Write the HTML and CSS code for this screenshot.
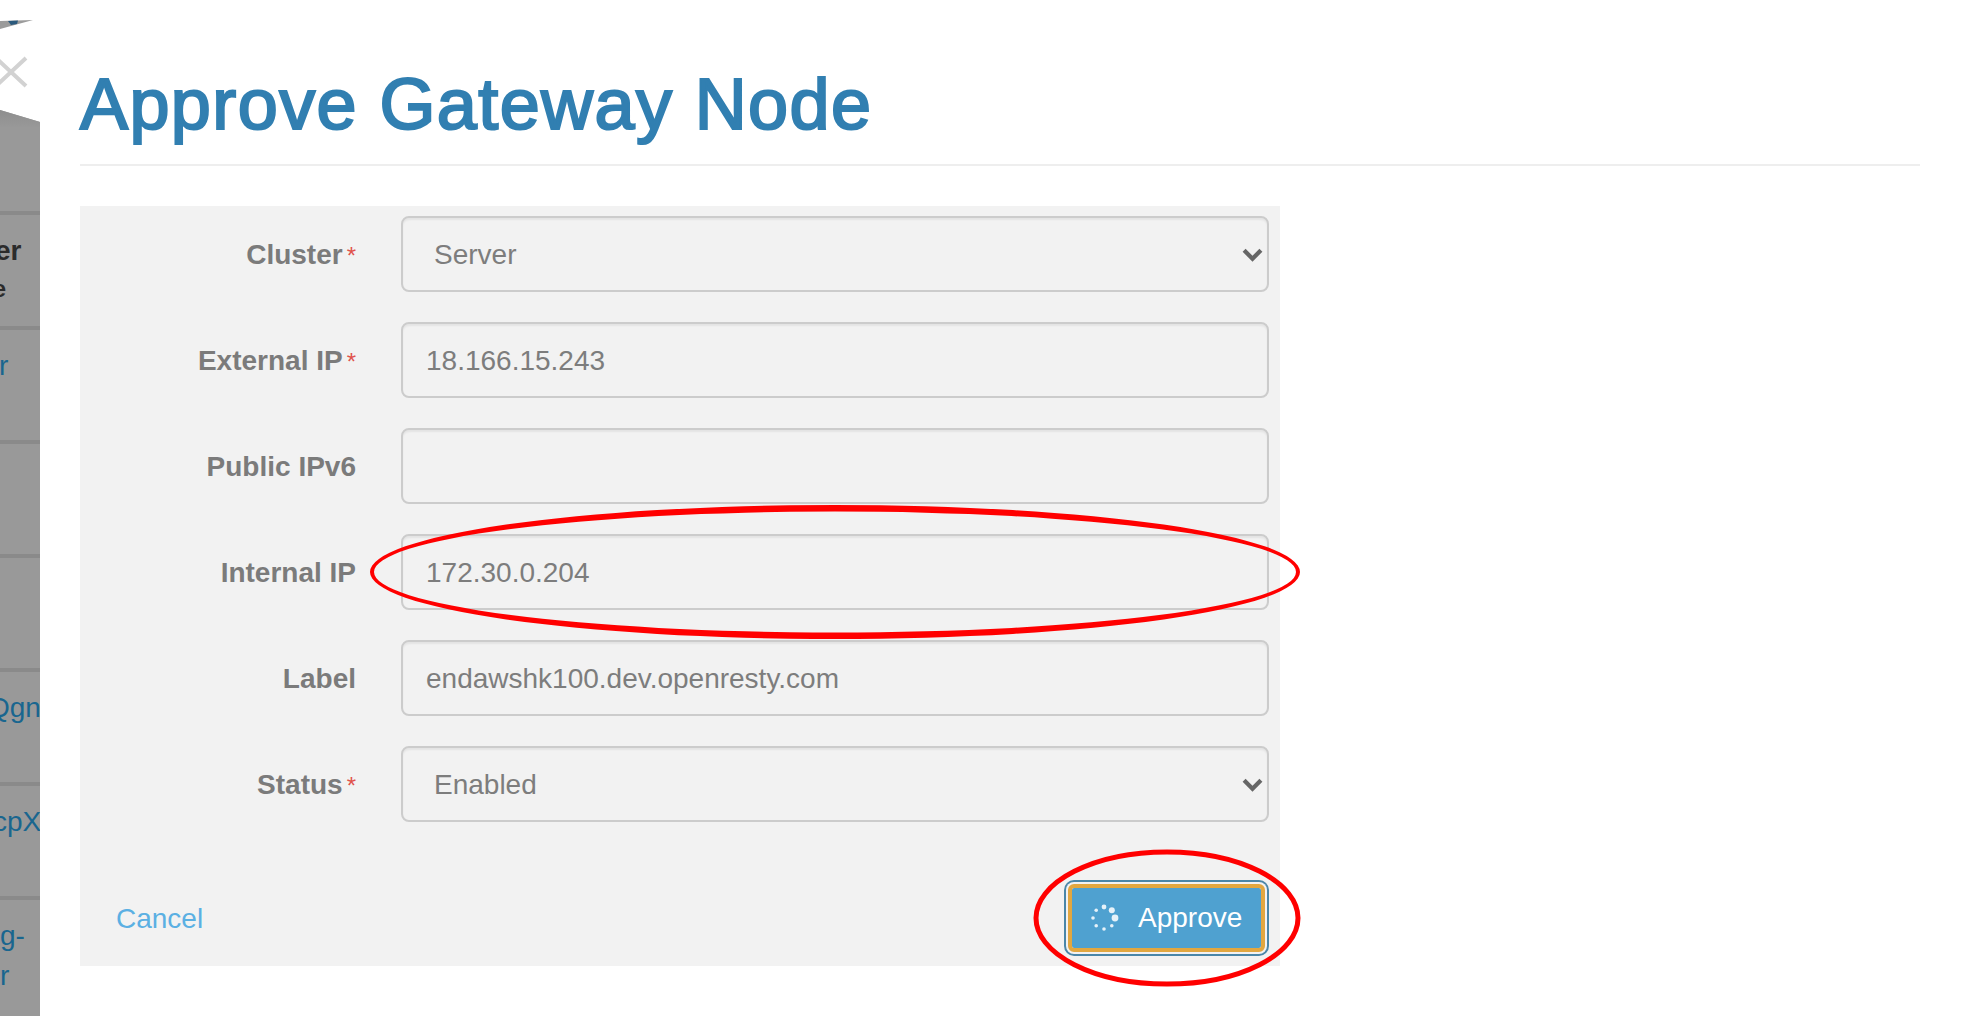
FILE: index.html
```html
<!DOCTYPE html>
<html lang="en">
<head>
<meta charset="utf-8">
<title>Approve Gateway Node</title>
<link rel="stylesheet" href="styles.css">
</head>
<body>
<div class="page">
  <aside class="backdrop">
    <div class="row row-blank"></div>
    <div class="row row-head"><b class="head-a">Cluster</b><b class="head-b">Node</b></div>
    <div class="row"><a class="link-r">r</a></div>
    <div class="row"></div>
    <div class="row"></div>
    <div class="row"><a class="link-q">Qgn</a></div>
    <div class="row"><a class="link-c">cpX</a></div>
    <div class="row row-two"><a>g-</a><a>r</a></div>
  </aside>
  <main class="content">
    <h1 class="title">Approve Gateway Node</h1>
    <form class="panel">
      <div class="field">
        <label class="label">Cluster<span class="req">*</span></label>
        <div class="select-wrap">
          <select class="control select"><option>Server</option></select>
          <svg class="chevron" viewBox="0 0 20 14"><path d="M2 3l8 8 8-8"/></svg>
        </div>
      </div>
      <div class="field">
        <label class="label">External IP<span class="req">*</span></label>
        <input class="control" type="text" value="18.166.15.243">
      </div>
      <div class="field">
        <label class="label">Public IPv6</label>
        <input class="control" type="text" value="">
      </div>
      <div class="field">
        <label class="label">Internal IP</label>
        <input class="control" type="text" value="172.30.0.204">
      </div>
      <div class="field">
        <label class="label">Label</label>
        <input class="control" type="text" value="endawshk100.dev.openresty.com">
      </div>
      <div class="field">
        <label class="label">Status<span class="req">*</span></label>
        <div class="select-wrap">
          <select class="control select"><option>Enabled</option></select>
          <svg class="chevron" viewBox="0 0 20 14"><path d="M2 3l8 8 8-8"/></svg>
        </div>
      </div>
      <div class="actions">
        <a class="cancel" href="#">Cancel</a>
        <button class="approve" type="button">
          <svg class="spinner" viewBox="0 0 30 30">
            <circle cx="26" cy="15" r="3.4"/>
            <circle cx="22.8" cy="7.2" r="3"/>
            <circle cx="15" cy="4" r="2.4"/>
            <circle cx="7.2" cy="7.2" r="1.8"/>
            <circle cx="4" cy="15" r="1.8"/>
            <circle cx="7.2" cy="22.8" r="1.8"/>
            <circle cx="15" cy="26" r="1.8"/>
            <circle cx="22.8" cy="22.8" r="1.8"/>
          </svg>
          <span>Approve</span>
        </button>
      </div>
    </form>
  </main>
</div>

<svg class="torn" viewBox="0 0 40 130">
  <polygon class="torn-tip" points="0,21 33,20 0,29"/>
  <polygon class="torn-dark" points="8,21 18,20.6 17,24 11,25"/>
</svg>
<svg class="close" viewBox="0 0 28 32"><path d="M-4 2L26 30M26 2L-4 30"/></svg>
<svg class="marks" viewBox="0 0 1980 1016">
  <path class="mark-fill" d="M370 572a465 67 0 1 0 930 0a465 67 0 1 0-930 0ZM374 572a461 60.5 0 1 0 922 0a461 60.5 0 1 0-922 0Z"/>
  <ellipse class="mark-line" cx="1167" cy="918" rx="131" ry="66"/>
</svg>
</body>
</html>
```

FILE: styles.css
```css
* { box-sizing: border-box; }
html, body { margin: 0; height: 100%; background: #fff; }
body {
  font-family: "Liberation Sans", Arial, sans-serif;
  color: #777;
  overflow: hidden;
  position: relative;
}
.page { display: flex; height: 1016px; }

/* dimmed table behind the modal */
.backdrop {
  width: 40px;
  flex: none;
  overflow: hidden;
  background: #999;
  display: flex;
  flex-direction: column;
  clip-path: polygon(0 110px, 40px 122px, 40px 1016px, 0 1016px);
  font-size: 28px;
}
.row {
  height: 114px;
  flex: none;
  border-bottom: 4px solid #8a8a8a;
  white-space: nowrap;
  padding-top: 16px;
}
.row a { display: block; color: #19668f; line-height: 40px; }
.row-blank {
  height: 215px;
  background: linear-gradient(#8e8e8e 110px, #999 128px);
}
.row-head { height: 115px; padding-top: 18px; }
.row-head b { display: block; color: #2b2b2b; }
.head-a { margin-left: -75px; line-height: 36px; }
.head-b { margin-left: -54px; font-size: 24px; line-height: 40px; }
.link-r { margin-left: -1px; }
.link-q { margin-left: -12px; }
.link-c { margin-left: -7px; }
.row-two { padding-top: 16px; height: 120px; }

.content {
  width: 1880px;
  padding-left: 40px;
  flex: none;
}
.title {
  margin: 0 0 40px;
  height: 166px;
  padding-top: 64px;
  font-size: 72px;
  line-height: 80px;
  font-weight: 400;
  letter-spacing: 1.4px;
  -webkit-text-stroke: 2.2px #317fb1;
  color: #317fb1;
  border-bottom: 2px solid #eee;
  white-space: nowrap;
}
.panel {
  width: 1200px;
  height: 760px;
  background: #f2f2f2;
  padding: 10px 11px 10px 0;
  display: flex;
  flex-direction: column;
  gap: 30px;
}
.field {
  display: flex;
  align-items: center;
  gap: 45px;
  height: 76px;
}
.label {
  width: 276px;
  flex: none;
  text-align: right;
  font-size: 28px;
  font-weight: 700;
  color: #7b7b7b;
  padding-top: 1px;
}
.req { color: #e0524d; font-weight: 400; margin-left: 4px; font-size: 24px; }
.control {
  width: 868px;
  height: 76px;
  flex: none;
  border: 2px solid #ccc;
  border-radius: 8px;
  background: #f2f2f2;
  box-shadow: inset 0 2px 2px rgba(0, 0, 0, .06);
  padding: 1px 23px 0;
  font: 28px "Liberation Sans", Arial, sans-serif;
  color: #7d7d7d;
  outline: none;
}
.select-wrap { position: relative; width: 868px; flex: none; }
.select {
  appearance: none;
  -webkit-appearance: none;
  padding-left: 31px;
  display: block;
}
.chevron {
  position: absolute;
  right: 6px;
  top: 31px;
  width: 21px;
  height: 15px;
  fill: none;
  stroke: #666;
  stroke-width: 4;
  pointer-events: none;
}
.actions {
  margin-top: 28px;
  display: flex;
  justify-content: space-between;
  align-items: center;
  padding-left: 36px;
}
.cancel {
  font-size: 28px;
  color: #5bb0e3;
  text-decoration: none;
  padding-top: 1px;
}
.approve {
  width: 197px;
  height: 68px;
  margin: 4px;
  display: flex;
  align-items: center;
  gap: 19px;
  padding: 0 0 0 17px;
  background: #4fa1d0;
  border: 4px solid #e2a740;
  border-radius: 6px;
  box-shadow: 0 0 0 2px #f2f2f2, 0 0 0 4px #4a86a8;
  background-clip: padding-box;
  color: #fff;
  font: 28px "Liberation Sans", Arial, sans-serif;
}
.spinner { width: 30px; height: 30px; fill: #e6f2f9; flex: none; }

/* scraps of the modal behind, and the hand-drawn annotations */
.torn { position: absolute; left: 0; top: 0; width: 40px; height: 130px; pointer-events: none; }
.torn-tip { fill: #9b9b9b; }
.torn-dark { fill: #2b5a7d; }
.close {
  position: absolute;
  left: 0;
  top: 56px;
  width: 28px;
  height: 32px;
  fill: none;
  stroke: #d2d2d2;
  stroke-width: 4;
}
.marks {
  position: absolute;
  left: 0;
  top: 0;
  width: 1980px;
  height: 1016px;
  pointer-events: none;
}
.mark-fill { fill: #f00; fill-rule: evenodd; }
.mark-line { fill: none; stroke: #f00; stroke-width: 5; }
```
